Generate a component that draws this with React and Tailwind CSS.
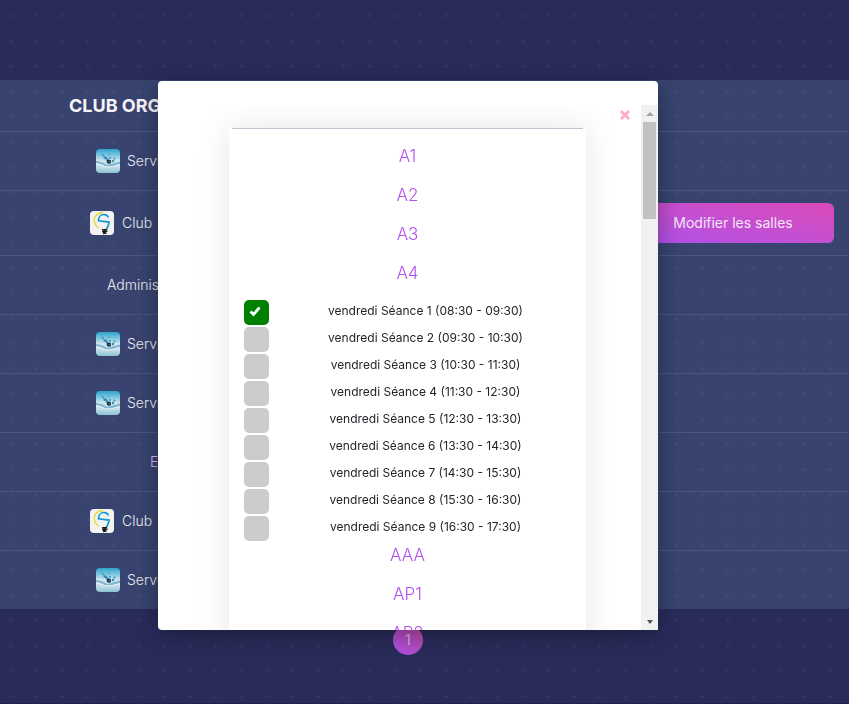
import React from "react";

const rooms = ["A1", "A2", "A3", "A4"];
const moreRooms = ["AAA", "AP1", "AP2"];
const sessions = [
  "08:30 - 09:30",
  "09:30 - 10:30",
  "10:30 - 11:30",
  "11:30 - 12:30",
  "12:30 - 13:30",
  "13:30 - 14:30",
  "14:30 - 15:30",
  "15:30 - 16:30",
  "16:30 - 17:30",
];
const clubs = [
  { kind: "service" },
  { kind: "club", action: true },
  { kind: "admin" },
  { kind: "service" },
  { kind: "service" },
  { kind: "other" },
  { kind: "club" },
  { kind: "service" },
];

function Dots() {
  return (
    <svg className="pointer-events-none absolute inset-0 h-full w-full" aria-hidden="true">
      <defs>
        <pattern id="dots" width="25.6" height="25.2" patternUnits="userSpaceOnUse">
          <circle cx="10.9" cy="15.8" r="1.6" fill="#8f8fd0" fillOpacity="0.09" />
        </pattern>
      </defs>
      <rect width="100%" height="100%" fill="url(#dots)" />
    </svg>
  );
}

function WaterLogo() {
  return (
    <svg viewBox="0 0 24 24" className="h-6 w-6 shrink-0 rounded" aria-hidden="true">
      <defs>
        <linearGradient id="water" x1="0" y1="0" x2="0" y2="1">
          <stop offset="0" stopColor="#2ba3cf" />
          <stop offset="0.3" stopColor="#8accdf" />
          <stop offset="0.5" stopColor="#d5e5ed" />
          <stop offset="0.75" stopColor="#c2dde7" />
          <stop offset="1" stopColor="#8bc3d3" />
        </linearGradient>
      </defs>
      <rect width="24" height="24" fill="url(#water)" />
      <path d="M0 12c3 0 5 1 8 2l3 2 4-1 3-1c3 0 4-2 6-1v2c-3 0-4 1-7 2-4 1-7 1-10-1-2-1-4-2-7-2z" fill="#7fb7d2" />
      <path d="M0 15c4 0 7 3 12 3s8-2 12-2" fill="none" stroke="#e6f1f5" />
      <path d="M5 5l2 0 1 2 3 1 1 2 2 1-2 1-3-2-2-1 1-1z" fill="#378dba" />
      <circle cx="14" cy="9" r="1" fill="#3b93bd" />
      <circle cx="18.500" cy="9.500" r="1" fill="#3b93bd" />
      <circle cx="13" cy="5.500" r="0.700" fill="#3b93bd" />
      <circle cx="17" cy="12" r="1.200" fill="#3986ac" />
      <path d="M10.500 11.500c1.500-1.300 3.500-1 4.500 0v2.500c-1 1-3 1-4 0z" fill="#12344a" />
      <path d="M12 12.800h2.500" stroke="#6ca7bd" strokeWidth="0.600" />
    </svg>
  );
}

function BulbLogo() {
  return (
    <svg viewBox="0 0 24 24" className="h-6 w-6 shrink-0 rounded" aria-hidden="true">
      <rect width="24" height="24" fill="#f2f2f2" />
      <path d="M13 1.500C7 1.500 4 5.500 4.300 9.500c.2 3.500 2 6 4.500 7.500" fill="none" stroke="#e6da20" strokeWidth="1.300" />
      <path d="M18.500 6.500C17.500 4.300 16 3.500 13.800 3.500c-3 0-5.300 2.500-5.300 6.300l10.500 1.300c0 3-1.500 4-2 7" fill="none" stroke="#1499cc" strokeWidth="1.700" />
      <path d="M12 19l5-.7M12 20.800l5.500-.8M13 22.500l3.500-.5" stroke="#1b1b1b" strokeWidth="1.300" />
      <path d="M14.500 18v4.500" stroke="#1b1b1b" strokeWidth="2.500" />
    </svg>
  );
}

function ClubLabel({ kind }) {
  if (kind === "service")
    return (
      <div className="flex w-[136px] items-center gap-[7px]">
        <WaterLogo />
        <span>Service</span>
      </div>
    );
  if (kind === "club")
    return (
      <div className="flex w-[148px] items-center gap-2">
        <BulbLogo />
        <span>Club</span>
      </div>
    );
  if (kind === "admin") return <div className="w-[114px]">Administration</div>;
  return <div className="w-7 text-[#d9b8ff]">ET</div>;
}

function RoomLink({ name }) {
  return (
    <a href="#salle" className="block h-[39px] text-center text-[17px] leading-7 font-light text-[#b44ff0]">
      {name}
    </a>
  );
}

function Session({ index, hours, checked }) {
  const id = `seance-${index}`;
  return (
    <div className="flex h-[27px] items-end">
      <div className="grid h-[25px] w-[25px] shrink-0 place-items-center">
        <input
          id={id}
          type="checkbox"
          defaultChecked={checked}
          className="peer col-start-1 row-start-1 m-0 h-[25px] w-[25px] appearance-none rounded-[5px] bg-[#ccc] checked:bg-[#008000]"
        />
        <svg viewBox="0 0 12 12" className="pointer-events-none invisible col-start-1 row-start-1 mr-1 mb-1 h-3 w-3 peer-checked:visible" aria-hidden="true">
          <path d="M1.500 6.500l3 3L10.500 2.500" fill="none" stroke="#fff" strokeWidth="2.800" />
        </svg>
      </div>
      <label htmlFor={id} className="flex-1 pb-1 pl-[11px] text-center text-[12px] leading-5 whitespace-nowrap text-[#212529]">
        vendredi Séance {index} ({hours})
      </label>
    </div>
  );
}

function Modal() {
  return (
    <div className="pointer-events-none fixed inset-0 flex items-start justify-center pt-[81px] pr-[33px]">
      <div
        role="dialog"
        aria-label="Salles"
        className="pointer-events-auto flex h-[549px] w-full max-w-[500px] flex-col rounded bg-white pt-6 shadow-[0_5px_24px_rgba(0,0,0,0.35)]"
      >
        <div className="flex min-h-0 flex-1">
          <div className="flex-1 overflow-hidden rounded-bl">
            <div className="flex h-[23px] items-start justify-end pr-[10px]">
              <button type="button" aria-label="Fermer" className="mt-1 flex h-3 w-3 items-center justify-center">
                <svg viewBox="0 0 12 12" className="h-3 w-3">
                  <path d="M2 2l8 8M10 2l-8 8" stroke="#ffabc4" strokeWidth="2.800" />
                </svg>
              </button>
            </div>
            <div className="mr-[55px] ml-[71px] bg-white shadow-[0_0_32px_rgba(0,0,0,0.1)]">
              <div className="mx-[3px] border-t border-[#c3c3d3]" />
              <div className="px-[15px] pt-[13px]">
                {rooms.map((r) => (
                  <RoomLink key={r} name={r} />
                ))}
                {sessions.map((h, i) => (
                  <Session key={h} index={i + 1} hours={h} checked={i === 0} />
                ))}
                {moreRooms.map((r) => (
                  <RoomLink key={r} name={r} />
                ))}
              </div>
            </div>
          </div>
          <div className="flex w-[17px] flex-col items-center justify-between bg-[#f1f1f1]" aria-hidden="true">
            <div className="flex w-full flex-col items-center">
              <div className="flex h-[17px] items-center">
                <svg viewBox="0 0 8 4" className="h-1 w-2">
                  <path d="M0 4l4-4 4 4z" fill="#a3a3a3" />
                </svg>
              </div>
              <div className="h-[97px] w-[13px] bg-[#c1c1c1]" />
            </div>
            <div className="flex h-[17px] items-center">
              <svg viewBox="0 0 6 4" className="h-1 w-[6px]">
                <path d="M0 0h6l-3 4z" fill="#505050" />
              </svg>
            </div>
          </div>
        </div>
      </div>
    </div>
  );
}

export default function App() {
  return (
    <div className="relative min-h-screen overflow-hidden border-b border-[#202348] bg-[#292c5b] pt-20 font-['Inter','Open_Sans',sans-serif] text-[#ececf4]">
      <table className="w-full border-collapse bg-[#38446f] text-[14px] font-light">
        <thead>
          <tr className="h-[51px]">
            <th scope="col" className="w-[328px] p-0">
              <div className="mx-auto w-[190px] text-left text-[18px] font-bold whitespace-nowrap text-[#f7f5fa]">
                CLUB ORGANISATEUR
              </div>
            </th>
            <td className="p-0" />
          </tr>
        </thead>
        <tbody>
          {clubs.map((c, i) => (
            <tr key={i} className={c.action ? "h-[65px] border-t border-[#4a5580]" : "h-[59px] border-t border-[#4a5580]"}>
              <td className="p-0">
                <div className="flex justify-center">
                  <ClubLabel kind={c.kind} />
                </div>
              </td>
              <td className="p-0 pr-[15px] text-right">
                {c.action && (
                  <button
                    type="button"
                    className="h-10 w-[202px] rounded-md bg-linear-to-tr from-[#ae50ea] to-[#db48b8] text-[14px] font-normal text-[#f4e6f8]"
                  >
                    Modifier les salles
                  </button>
                )}
              </td>
            </tr>
          ))}
        </tbody>
      </table>
      <Dots />
      <nav aria-label="Pagination" className="flex justify-center pt-4 pr-[33px]">
        <button
          type="button"
          className="h-[30px] w-[30px] rounded-full bg-linear-to-tr from-[#ae50ea] to-[#b8479c] text-[15px] font-light text-[#e0c8ee]"
        >
          1
        </button>
      </nav>
      <Modal />
    </div>
  );
}
